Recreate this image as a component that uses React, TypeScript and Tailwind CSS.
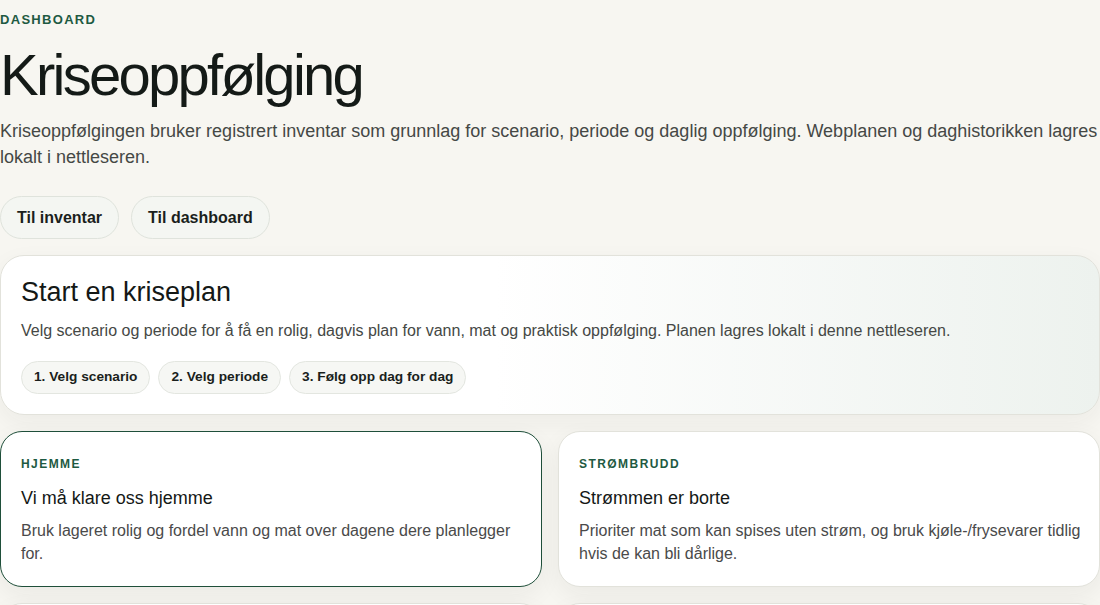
import React from 'react';

const scenarios = [
  {
    tag: 'Hjemme',
    title: 'Vi må klare oss hjemme',
    text: 'Bruk lageret rolig og fordel vann og mat over dagene dere planlegger for.',
    selected: true,
  },
  {
    tag: 'Strømbrudd',
    title: 'Strømmen er borte',
    text: 'Prioriter mat som kan spises uten strøm, og bruk kjøle-/frysevarer tidlig hvis de kan bli dårlige.',
    selected: false,
  },
  {
    tag: 'Vannmangel',
    title: 'Vi har lite rent vann',
    text: 'Sett av drikkevann først, og bruk resten til matlaging og enkel hygiene.',
    selected: false,
  },
  {
    tag: 'Evakuering',
    title: 'Vi må reise hjemmefra',
    text: 'Pakk det viktigste som er lett å bære, og planlegg for noen døgn borte.',
    selected: false,
  },
];

const steps = ['1. Velg scenario', '2. Velg periode', '3. Følg opp dag for dag'];

function PillLink({ children }: { children: React.ReactNode }) {
  return (
    <button className="h-[43px] rounded-full border border-[#dfe3dc] bg-[#f4f6f2] px-4 text-base font-bold text-[#1a1f1c]">
      {children}
    </button>
  );
}

function ScenarioCard({ tag, title, text, selected }: (typeof scenarios)[number]) {
  return (
    <div
      className={
        selected
          ? 'rounded-[22px] border border-[#1f4f3a] bg-white pt-[22px] pr-4 pb-[21px] pl-5 shadow-[0_8px_24px_rgba(40,40,30,0.06)]'
          : 'rounded-[22px] border border-[#e2e2db] bg-white pt-[22px] pr-4 pb-[21px] pl-5 shadow-[0_8px_24px_rgba(40,40,30,0.06)]'
      }
    >
      <p className="text-[12px] leading-5 font-bold tracking-[0.12em] text-[#1e5a42] uppercase">{tag}</p>
      <h3 className="mt-[11px] text-[18px] leading-[26px] text-[#141816]">{title}</h3>
      <p className="mt-2 text-base leading-[23px] text-[#4a4a4a]">{text}</p>
    </div>
  );
}

export default function App() {
  return (
    <div className="min-h-screen bg-[#f7f6f1] pt-[12px] font-['Liberation_Sans',Arial,sans-serif]">
      <p className="text-[13px] leading-4 font-bold tracking-[0.1em] text-[#1e5a42]">DASHBOARD</p>
      <h1 className="mt-[15px] text-[58px] leading-[64px] tracking-[-0.047em] text-[#141a17]">Kriseoppfølging</h1>
      <p className="mt-[11px] text-[18px] leading-[26px] text-[#454845]">
        Kriseoppfølgingen bruker registrert inventar som grunnlag for scenario, periode og daglig oppfølging. Webplanen og
        daghistorikken lagres lokalt i nettleseren.
      </p>

      <div className="mt-[26px] flex gap-3">
        <PillLink>Til inventar</PillLink>
        <PillLink>Til dashboard</PillLink>
      </div>

      <section className="mt-4 rounded-[24px] border border-[#e2e2db] bg-linear-to-r from-white from-45% to-[#edf2ee] px-5 pt-5 pb-5 shadow-[0_8px_24px_rgba(40,40,30,0.05)]">
        <h2 className="text-[27px] leading-8 text-[#141816]">Start en kriseplan</h2>
        <p className="mt-[11px] text-base leading-6 text-[#454845]">
          Velg scenario og periode for å få en rolig, dagvis plan for vann, mat og praktisk oppfølging. Planen lagres lokalt i
          denne nettleseren.
        </p>
        <div className="mt-[18px] flex gap-2">
          {steps.map((s) => (
            <span
              key={s}
              className="flex h-[33px] items-center rounded-full border border-[#e3e6e0] bg-[#f6f7f4] px-3 text-[13.7px] font-bold text-[#1a1f1c]"
            >
              {s}
            </span>
          ))}
        </div>
      </section>

      <div className="mt-4 grid grid-cols-2 gap-4 pb-10">
        {scenarios.map((s) => (
          <ScenarioCard key={s.tag} {...s} />
        ))}
      </div>
    </div>
  );
}
